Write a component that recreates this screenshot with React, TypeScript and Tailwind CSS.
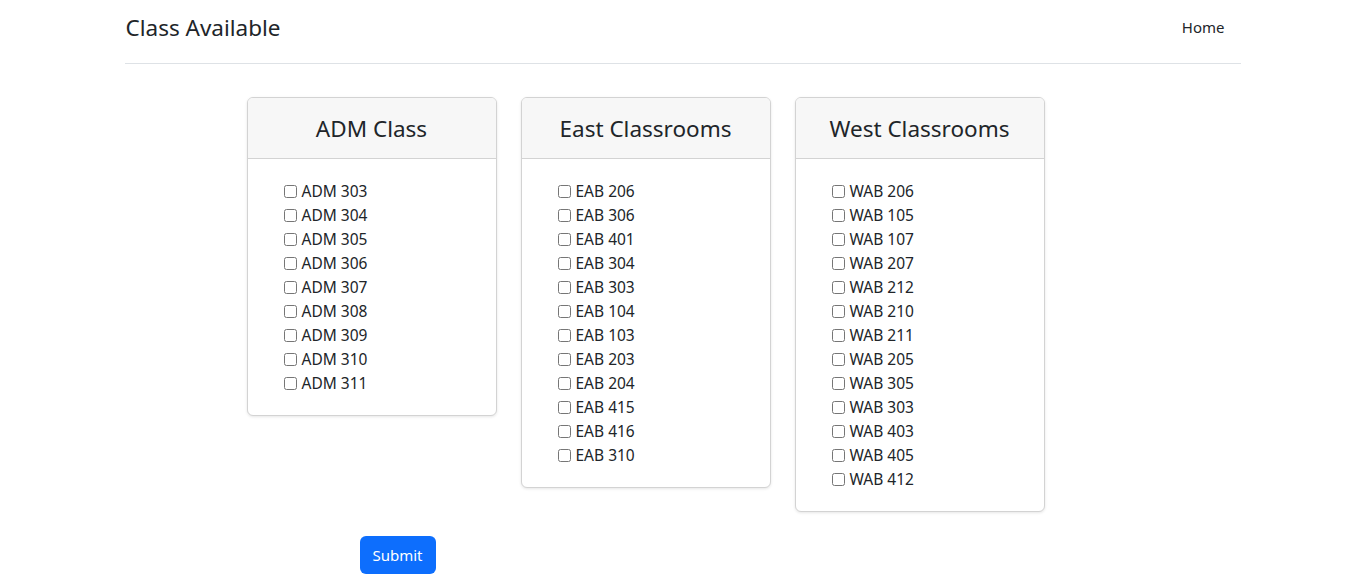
import React from "react";

const groups: { title: string; items: string[] }[] = [
  {
    title: "ADM Class",
    items: ["ADM 303", "ADM 304", "ADM 305", "ADM 306", "ADM 307", "ADM 308", "ADM 309", "ADM 310", "ADM 311"],
  },
  {
    title: "East Classrooms",
    items: ["EAB 206", "EAB 306", "EAB 401", "EAB 304", "EAB 303", "EAB 104", "EAB 103", "EAB 203", "EAB 204", "EAB 415", "EAB 416", "EAB 310"],
  },
  {
    title: "West Classrooms",
    items: ["WAB 206", "WAB 105", "WAB 107", "WAB 207", "WAB 212", "WAB 210", "WAB 211", "WAB 205", "WAB 305", "WAB 303", "WAB 403", "WAB 405", "WAB 412"],
  },
];

function Card({ title, items }: { title: string; items: string[] }) {
  return (
    <div className="w-[250px] rounded-[6px] border border-[#d3d3d3] bg-white shadow-[0_1px_3px_rgba(0,0,0,0.1)] overflow-hidden">
      <div className="h-[61px] flex items-center justify-center bg-[#f7f7f7] border-b border-[#d3d3d3]">
        <h4 className="text-[22.5px] leading-[29px] text-[#212529] pt-[1px]">{title}</h4>
      </div>
      <div className="pt-[20px] pb-[20px] pl-[36px]">
        {items.map((it) => (
          <label key={it} className="flex items-center h-[24px] text-[15.5px] leading-[24px] text-[#212529]">
            <input type="checkbox" className="w-[13px] h-[13px] m-0 mr-[5px]" />
            <span>{it}</span>
          </label>
        ))}
      </div>
    </div>
  );
}

export default function App() {
  return (
    <div
      className="min-h-[581px] bg-white text-[#212529]"
      style={{ fontFamily: '"Noto Sans", "Open Sans", sans-serif' }}
    >
      <div className="max-w-[1140px] mx-auto px-3">
        <header className="flex justify-between items-center pt-[8px] pb-[15px] border-b border-[#dee2e6]">
          <span className="text-[22.5px] leading-[40px] pl-[1px]">Class Available</span>
          <a href="#" className="px-4 pt-[7px] pb-[9px] text-[15px] leading-[24px] text-[#212529]">
            Home
          </a>
        </header>
        <div className="mt-[33px] ml-[122px] flex items-start gap-[24px]">
          {groups.map((g) => (
            <Card key={g.title} title={g.title} items={g.items} />
          ))}
        </div>
        <div className="mt-[24px] ml-[235px]">
          <button className="h-[38px] w-[76px] rounded-[6px] bg-[#0d6efd] text-white text-[15px] leading-[24px]">
            Submit
          </button>
        </div>
      </div>
    </div>
  );
}
